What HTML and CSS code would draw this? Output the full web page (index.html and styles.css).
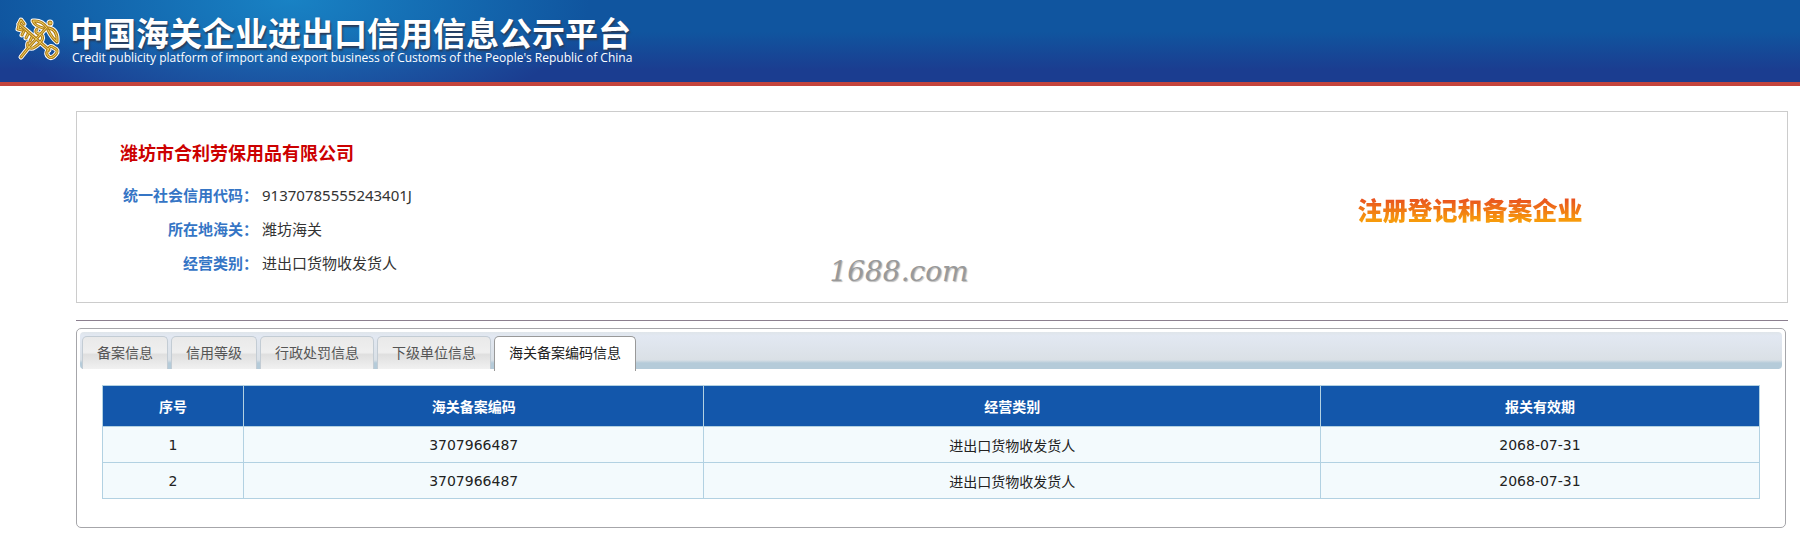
FILE: index.html
```
<!DOCTYPE html>
<html lang="zh-CN">
<head>
  <meta charset="UTF-8">
  <meta name="viewport" content="width=device-width, initial-scale=1.0">
  <title>中国海关企业进出口信用信息公示平台</title>
  <link rel="stylesheet" href="styles.css">
</head>
<body>
  <header class="header">
    <svg class="emblem" viewBox="0 0 44 44" aria-hidden="true">
      <defs>
        <g id="keys">
          <path d="M3 8 L33 34"/>
          <path d="M3 8 L5 4 L8 8 M3 9 L2 13 L6 14 M8 15 L6 19 M12 18 L10 22 M16 21 L14 25"/>
          <path d="M32 34 Q34 28 38 32 Q43 34 40 38 Q36 43 33 41 Q29 38 32 34 Z"/>
          <path d="M5 41 L13 31 L31 11"/>
          <path d="M12 27 Q10 33 17 32 Q23 29 26 24 Q28 19 23 18 Q18 17 21 13"/>
          <path d="M31 12 Q26 4 17 5 Q19 10 27 12 M33 12 Q42 14 41 26 Q36 22 32 14"/>
          <circle cx="34" cy="7" r="1"/>
        </g>
      </defs>
      <use href="#keys" class="emblem-edge"/>
      <use href="#keys" class="emblem-dark"/>
      <use href="#keys" class="emblem-gold"/>
    </svg>
    <div class="brand">
      <h1>中国海关企业进出口信用信息公示平台</h1>
      <p>Credit publicity platform of import and export business of Customs of the People's Republic of China</p>
    </div>
  </header>

  <main class="main">
    <section class="company">
      <div class="company-info">
        <h2>潍坊市合利劳保用品有限公司</h2>
        <dl>
          <dt>统一社会信用代码：</dt>
          <dd>91370785555243401J</dd>
          <dt>所在地海关：</dt>
          <dd>潍坊海关</dd>
          <dt>经营类别：</dt>
          <dd>进出口货物收发货人</dd>
        </dl>
      </div>
      <div class="company-type"><span>注册登记和备案企业</span></div>
      <span class="watermark">1688.com</span>
    </section>

    <hr class="divider">

    <section class="tabs">
      <div class="tab-bar" role="tablist">
        <button type="button" class="tab" role="tab">备案信息</button>
        <button type="button" class="tab" role="tab">信用等级</button>
        <button type="button" class="tab" role="tab">行政处罚信息</button>
        <button type="button" class="tab" role="tab">下级单位信息</button>
        <button type="button" class="tab active" role="tab" aria-selected="true">海关备案编码信息</button>
      </div>
      <div class="tab-panel" role="tabpanel">
        <table class="records">
          <colgroup>
            <col class="col-no">
            <col class="col-code">
            <col class="col-type">
            <col class="col-date">
          </colgroup>
          <thead>
            <tr>
              <th>序号</th>
              <th>海关备案编码</th>
              <th>经营类别</th>
              <th>报关有效期</th>
            </tr>
          </thead>
          <tbody>
            <tr>
              <td>1</td>
              <td>3707966487</td>
              <td>进出口货物收发货人</td>
              <td>2068-07-31</td>
            </tr>
            <tr>
              <td>2</td>
              <td>3707966487</td>
              <td>进出口货物收发货人</td>
              <td>2068-07-31</td>
            </tr>
          </tbody>
        </table>
      </div>
    </section>
  </main>
</body>
</html>
```
FILE: styles.css
```
* {
  box-sizing: border-box;
}
body {
  margin: 0;
  background: #fff;
  color: #333;
  font-family: "Noto Sans", "Noto Sans CJK SC", sans-serif;
  font-size: 14px;
}
h1, h2, p, dl, dd {
  margin: 0;
}

/* header */
.header {
  display: flex;
  align-items: flex-start;
  gap: 10px;
  height: 86px;
  padding: 14px 16px 0;
  border-bottom: 4px solid #c4443c;
  background:
    radial-gradient(ellipse 300px 130px at 290px 0, rgba(26, 138, 203, 0.85), rgba(26, 138, 203, 0)),
    linear-gradient(#10559f 0, #10559f 32px, #1b3d90 70px);
}
.emblem {
  width: 44px;
  height: 48px;
  overflow: visible;
  fill: none;
  stroke-linecap: round;
  stroke-linejoin: round;
}
.emblem-edge {
  stroke: #fff;
  stroke-width: 5;
}
.emblem-dark {
  stroke: #b07d18;
  stroke-width: 3;
}
.emblem-gold {
  stroke: #f3d566;
  stroke-width: 1;
}
.brand {
  color: #fff;
}
.brand h1 {
  font-family: "Noto Sans CJK SC", sans-serif;
  font-size: 33px;
  font-weight: 700;
  line-height: 36px;
  text-shadow: 1px 2px 2px #2b3a55;
}
.brand p {
  padding-left: 2px;
  font-family: "Open Sans", Arial, sans-serif;
  font-size: 12px;
  line-height: 16px;
}

/* company card */
.main {
  padding: 25px 12px 9px 76px;
}
.company {
  position: relative;
  display: flex;
  padding: 26px 43px 22px;
  border: 1px solid #ccc;
}
.company-info {
  flex: 1;
}
.company h2 {
  color: #c00;
  font-family: "Noto Sans CJK SC", sans-serif;
  font-size: 18px;
  line-height: 28px;
}
.company dl {
  display: grid;
  grid-template-columns: 138px 1fr;
  gap: 0 4px;
  padding-top: 12px;
  font-size: 15px;
  line-height: 34px;
}
.company dt {
  color: #3575c5;
  font-weight: 700;
  text-align: right;
}
.company-type {
  display: flex;
  align-items: center;
  width: 23.8%;
}
.company-type span {
  background: linear-gradient(#e84f20 20%, #f79a0c 80%);
  background-clip: text;
  -webkit-background-clip: text;
  color: transparent;
  font-family: "Noto Sans CJK SC", sans-serif;
  font-size: 25px;
  font-weight: 900;
}
.watermark {
  position: absolute;
  bottom: 14px;
  left: 44%;
  color: #999;
  font-family: "DejaVu Serif", serif;
  font-size: 28px;
  font-style: italic;
  text-shadow: 1px 1px 1px #bbb;
}
.divider {
  margin: 17px 0 7px;
  border: 0;
  border-top: 1px solid #8b7f8f;
}

/* tabs */
.tabs {
  margin-right: 2px;
  padding: 3px;
  border: 1px solid #a6a6aa;
  border-radius: 5px;
}
.tab-bar {
  display: flex;
  gap: 3px;
  height: 37px;
  padding: 4px 2px 0;
  border-radius: 4px;
  background: linear-gradient(#dfe5ea 0, #e2e8f2 4px, #dae0e6 28px, #b5cbd9 31px, #b5cbd9 100%);
}
.tab {
  height: 33px;
  padding: 0 14px 2px;
  border: 1px solid #c3ccd4;
  border-bottom: 0;
  border-radius: 5px 5px 0 0;
  background: linear-gradient(#e9e9e9, #efefef 48%, #dfdfdf 55%, #f1f1f1);
  color: #555;
  font-family: "Noto Sans CJK SC", sans-serif;
  font-size: 14px;
}
.tab.active {
  height: 35px;
  padding-bottom: 4px;
  border-color: #999;
  background: #fff;
  color: #222;
}
.tab-panel {
  padding: 16px 22px 25px;
}

/* records table */
.records {
  width: 100%;
  border-collapse: collapse;
  table-layout: fixed;
  background: #f3fafd;
  color: #222;
  font-family: "DejaVu Sans", "Noto Sans CJK SC", sans-serif;
  text-align: center;
}
.records th,
.records td {
  height: 36px;
  padding: 0;
  border: 1px solid #b2d1e2;
}
.records th {
  height: 41px;
  background: #1357ab;
  color: #fff;
}
.col-no {
  width: 8.5%;
}
.col-code {
  width: 27.8%;
}
.col-type {
  width: 37.2%;
}
```
